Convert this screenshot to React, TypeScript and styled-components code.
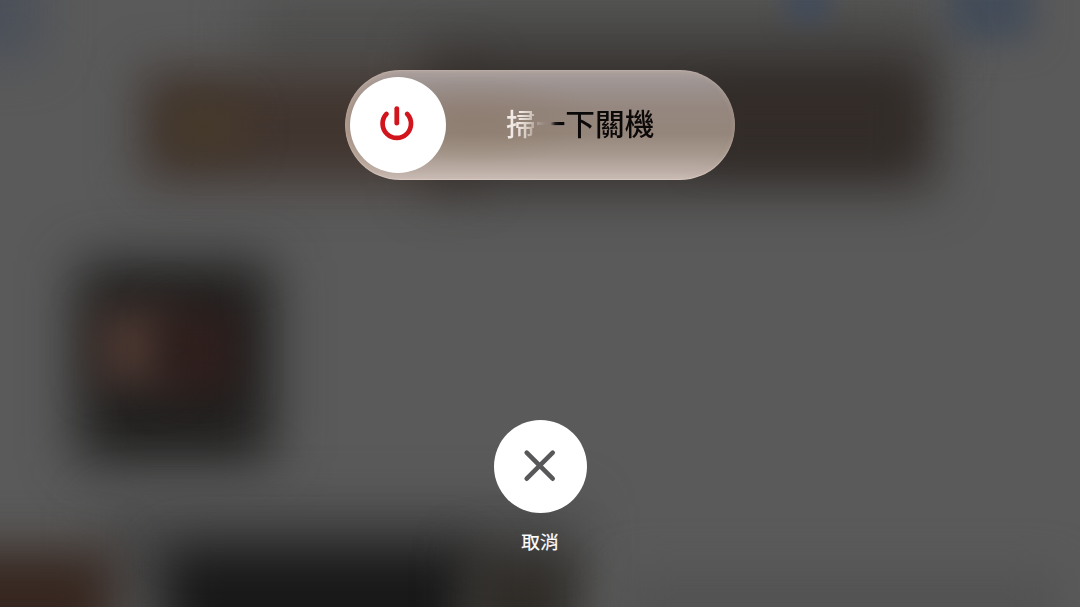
import styled, { createGlobalStyle } from 'styled-components';

const GlobalStyle = createGlobalStyle`
  body {
    margin: 0;
    overflow: hidden;
  }
`;

const Screen = styled.main`
  display: grid;
  width: 1080px;
  height: 607px;
  overflow: hidden;
  background: #5a5a5a;
  font-family: 'Noto Sans CJK TC', sans-serif;
`;

const WallpaperArt = styled.svg`
  grid-area: 1 / 1;
  display: block;
`;

const Controls = styled.div`
  grid-area: 1 / 1;
  z-index: 1;
  display: flex;
  flex-direction: column;
  align-items: center;
  justify-content: space-between;
  padding: 70px 0 52px;
`;

const Track = styled.div`
  display: flex;
  align-items: center;
  box-sizing: border-box;
  width: 390px;
  height: 110px;
  padding-left: 5px;
  border-radius: 55px;
  background:
    radial-gradient(ellipse 130px 45px at 130px 50px, rgba(128, 106, 86, 0.3), transparent),
    linear-gradient(#a99f9d 0%, #9c928f 14%, #95877f 35%, #95867b 58%, #a89a8f 78%, #beb0a8 93%, #cbc0bb 100%);
  box-shadow:
    inset 0 1px 1px rgba(225, 212, 208, 0.2),
    inset 0 -1px 1px rgba(235, 224, 220, 0.4),
    inset 5px 0 8px rgba(205, 180, 164, 0.55),
    inset -2px 0 5px rgba(190, 172, 162, 0.2);
`;

const Round = styled.button<{ $size: number }>`
  display: flex;
  flex: none;
  align-items: center;
  justify-content: center;
  width: ${({ $size }) => $size}px;
  height: ${({ $size }) => $size}px;
  padding: 0;
  border: 0;
  border-radius: 50%;
  background: #fff;
`;

const SlideText = styled.span`
  margin-left: 60px;
  padding-bottom: 4px;
  background: linear-gradient(
    100deg,
    #f3ede9 0%,
    #eee6e1 11%,
    #d3c8bf 17%,
    #ac9e94 22%,
    #95877d 27%,
    #8f8177 31%,
    #1f1a19 34%,
    #0b0808 37%
  );
  background-clip: text;
  color: transparent;
  font-size: 29.7px;
  font-weight: 500;
  line-height: 44px;
  white-space: nowrap;
`;

const Cancel = styled.div`
  display: flex;
  flex-direction: column;
  align-items: center;
  gap: 14.5px;
`;

const CancelText = styled.span`
  color: #fff;
  font-size: 18.7px;
  line-height: 28px;
  -webkit-text-stroke: 0.2px #fff;
`;

// x, y, width, height, colour, blur
const shapes: [number, number, number, number, string, number][] = [
  [-60, -40, 100, 100, '#4b5059', 24],
  [250, 0, 690, 70, '#4e4e4d', 26],
  [785, -30, 45, 55, '#454e5c', 11],
  [950, -40, 82, 80, '#434c59', 17],
  [142, 70, 335, 112, '#41352f', 25],
  [165, 102, 80, 50, '#463a2c', 18],
  [425, 50, 510, 138, '#322d2a', 27],
  [700, 92, 210, 66, '#332c29', 18],
  [78, 262, 194, 200, '#201f1e', 27],
  [94, 308, 82, 78, '#4a3731', 20],
  [160, 308, 76, 86, '#2f1f1d', 20],
  [100, 505, 480, 100, '#4b4b4b', 25],
  [-60, 550, 175, 140, '#36261f', 25],
  [162, 546, 315, 160, '#181818', 26],
  [465, 552, 112, 160, '#2f2c28', 24],
  [620, 575, 440, 100, '#525252', 24],
];

const Wallpaper = () => (
  <WallpaperArt width="1080" height="607" viewBox="0 0 1080 607">
    <g>
      {shapes.map(([x, y, w, h, color, blur]) => (
        <rect key={`${x}-${y}`} x={x} y={y} width={w} height={h} fill={color} filter={`blur(${blur}px)`} />
      ))}
    </g>
  </WallpaperArt>
);

const PowerIcon = () => (
  <svg width="40" height="40" viewBox="0 0 40 40" fill="none" stroke="#d2141c" strokeLinecap="round">
    <path d="M8.5 8.9a14.2 14.2 0 1 0 20.6 0" strokeWidth="4.7" />
    <path d="M18.8 3.6v14.6" strokeWidth="4.8" />
  </svg>
);

const CloseIcon = () => (
  <svg width="40" height="40" viewBox="0 0 40 40" fill="none" stroke="#58585a" strokeLinecap="round">
    <path d="M6.7 6.7l26 26M32.7 6.7l-26 26" strokeWidth="4.6" />
  </svg>
);

export default function App() {
  return (
    <>
      <GlobalStyle />
      <Screen>
        <Wallpaper />
        <Controls>
          <Track>
            <Round $size={96} aria-label="關機">
              <PowerIcon />
            </Round>
            <SlideText>掃一下關機</SlideText>
          </Track>
          <Cancel>
            <Round $size={93} aria-label="取消">
              <CloseIcon />
            </Round>
            <CancelText>取消</CancelText>
          </Cancel>
        </Controls>
      </Screen>
    </>
  );
}
